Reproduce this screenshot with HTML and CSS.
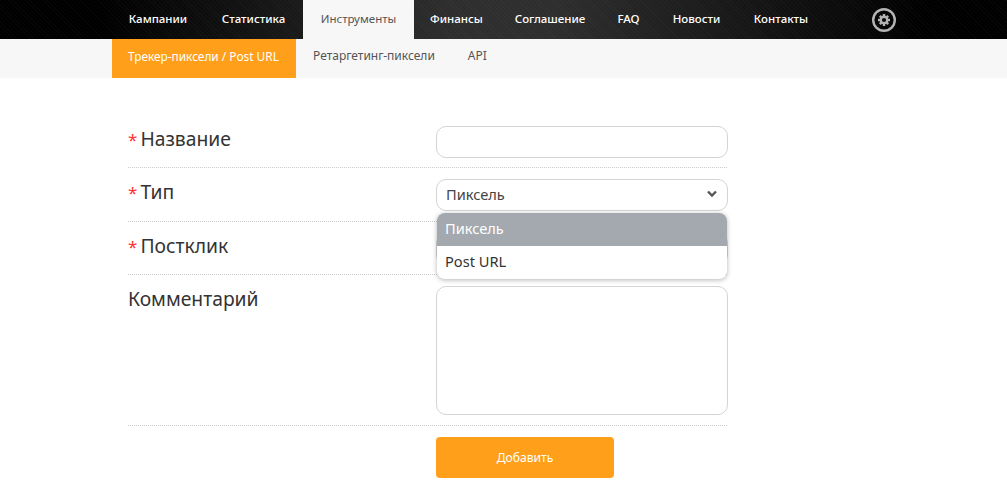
FILE: index.html
```html
<!DOCTYPE html>
<html lang="ru">
<head>
    <meta charset="UTF-8">
    <title>Инструменты</title>
    <link rel="stylesheet" href="styles.css">
</head>
<body>
    <div class="topbar">
        <div class="wrap nav">
            <a class="nav-item">Кампании</a>
            <a class="nav-item">Статистика</a>
            <a class="nav-item active">Инструменты</a>
            <a class="nav-item">Финансы</a>
            <a class="nav-item">Соглашение</a>
            <a class="nav-item">FAQ</a>
            <a class="nav-item">Новости</a>
            <a class="nav-item">Контакты</a>
            <svg class="gear" width="26" height="26" viewBox="0 0 26 26">
                <circle cx="13" cy="13" r="10.8" fill="none" stroke="#b4b4b4" stroke-width="2.4"/>
                <path d="M13 7v12M7 13h12M8.8 8.8l8.4 8.4M17.2 8.8l-8.4 8.4" stroke="#b4b4b4" stroke-width="2.4"/>
                <circle cx="13" cy="13" r="4.4" fill="#b4b4b4"/>
                <circle cx="13" cy="13" r="2.1" fill="#0c0c0c"/>
            </svg>
        </div>
    </div>
    <div class="subbar">
        <div class="wrap subnav">
            <a class="sub-item active">Трекер-пиксели / Post URL</a>
            <a class="sub-item">Ретаргетинг-пиксели</a>
            <a class="sub-item">API</a>
        </div>
    </div>

    <form class="wrap form">
        <div class="row">
            <label><span class="req">*</span> Название</label>
            <input class="field" type="text">
        </div>
        <div class="row tall">
            <label><span class="req">*</span> Тип</label>
            <div class="select-box">
                <div class="field select">
                    <span>Пиксель</span>
                    <svg width="12" height="8" viewBox="0 0 12 8"><path d="M2 1.5l4 4 4-4" fill="none" stroke="#555" stroke-width="2.4"/></svg>
                </div>
                <div class="dropdown">
                    <div class="option selected">Пиксель</div>
                    <div class="option">Post URL</div>
                </div>
            </div>
        </div>
        <div class="row">
            <label><span class="req">*</span> Постклик</label>
            <input class="field" type="text">
        </div>
        <div class="row tall">
            <label>Комментарий</label>
            <textarea class="field comment"></textarea>
        </div>
        <div class="row last">
            <span class="spacer"></span>
            <button type="button" class="submit">Добавить</button>
        </div>
    </form>
</body>
</html>
```

FILE: styles.css
```css
* {
    box-sizing: border-box;
}

body {
    font-family: 'Noto Sans', Arial, sans-serif;
    background-color: #fff;
    color: #333;
    margin: 0;
    padding: 0;
}

.wrap {
    width: 783px;
    margin-left: 112px;
}

.topbar {
    height: 39px;
    background:
        repeating-linear-gradient(45deg, rgba(255, 255, 255, 0.025) 0, rgba(255, 255, 255, 0.025) 1px, transparent 1px, transparent 3px),
        linear-gradient(to right, #000 10%, #2e2e2e 45%, #2e2e2e 55%, #000 92%);
}

.nav {
    display: grid;
    grid-template-columns: 92px 99px 111px 85px 102px 55px 81px 88px auto;
    align-items: center;
    height: 39px;
}

.nav-item {
    height: 39px;
    line-height: 37px;
    text-align: center;
    font-size: 11.5px;
    font-weight: 500;
    color: #fff;
    white-space: nowrap;
}

.nav-item.active {
    background-color: #f7f7f7;
    color: #555;
    font-weight: 400;
}

.gear {
    margin-left: 46px;
}

.subbar {
    height: 39px;
    background-color: #f7f7f7;
}

.subnav {
    display: flex;
    height: 39px;
}

.sub-item {
    height: 39px;
    line-height: 34px;
    padding: 0 16px 0 17px;
    font-size: 12px;
    color: #555;
    white-space: nowrap;
}

.sub-item.active {
    width: 184px;
    background-color: #ff9f1a;
    color: #fff;
    padding: 0 0 0 16px;
    font-size: 11.85px;
}

.form {
    width: 599px;
    margin-left: 128px;
    padding-top: 48px;
}

.row {
    display: flex;
    align-items: flex-start;
    padding: 0 0 9px;
    margin-bottom: 11px;
    border-bottom: 1px dotted #ccc;
}

.row.tall {
    padding-bottom: 10px;
}

.row.last {
    border-bottom: none;
    margin-bottom: 0;
    padding-bottom: 0;
}

label {
    width: 308px;
    font-size: 19.3px;
    line-height: 26px;
    color: #333;
}

.req {
    color: #f33;
    font-size: 17px;
    margin-right: -2px;
}

.spacer {
    width: 308px;
}

.field {
    display: block;
    width: 292px;
    height: 32px;
    margin-right: -1px;
    background-color: #fff;
    border: 1px solid #d4d4d4;
    border-radius: 10px;
    font-family: inherit;
    font-size: 14.6px;
    color: #444;
}

.comment {
    height: 129px;
    resize: none;
}

.select-box {
    position: relative;
}

.select {
    display: flex;
    align-items: center;
    justify-content: space-between;
    padding: 0 9px 2px 9px;
}

.dropdown {
    position: absolute;
    z-index: 2;
    top: 34px;
    left: 1px;
    width: 290px;
    background-color: #fff;
    border-radius: 8px;
    box-shadow: 0 1px 5px rgba(0, 0, 0, 0.3);
    overflow: hidden;
}

.option {
    height: 33px;
    line-height: 30px;
    padding: 0 8px;
    font-size: 14.6px;
    color: #333;
}

.option.selected {
    background-color: #a3a9ae;
    color: #fff;
}

.submit {
    width: 178px;
    height: 41px;
    border: none;
    border-radius: 4px;
    background-color: #ff9f1a;
    color: #fff;
    font-family: inherit;
    font-size: 12.1px;
}
```
